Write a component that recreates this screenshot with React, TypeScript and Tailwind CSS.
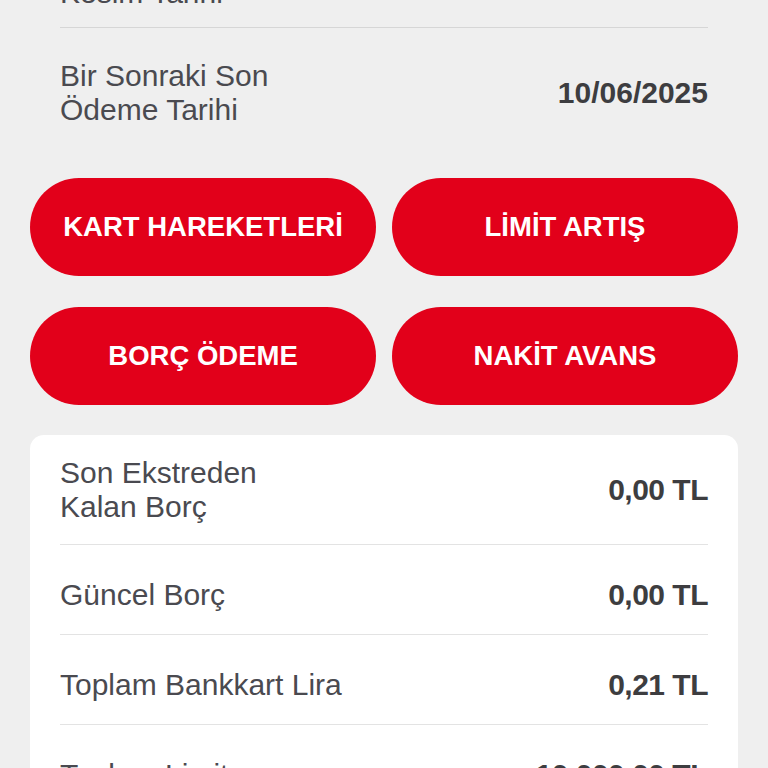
import React from "react";

const font = { fontFamily: '"Liberation Sans", Arial, sans-serif' };

function Row({
  label,
  value,
  two,
  className,
}: {
  label: React.ReactNode;
  value: string;
  two?: boolean;
  className?: string;
}) {
  return (
    <div
      className={
        "flex items-center justify-between " +
        (two ? "pt-[21px] pb-[20px] " : "pt-[33px] pb-[22px] ") +
        (className ?? "")
      }
    >
      <div className="text-[30px] leading-[34px] text-[#4a4a50]">{label}</div>
      <div className="text-[30px] leading-[34px] font-bold tracking-[-0.5px] text-[#3d3d40]">{value}</div>
    </div>
  );
}

function Btn({ children }: { children: React.ReactNode }) {
  return (
    <button className="h-[98px] rounded-full bg-[#e2001a] text-white text-[27.5px] font-bold flex items-center justify-center">
      {children}
    </button>
  );
}

export default function App() {
  return (
    <div className="w-[768px] h-[768px] overflow-hidden bg-[#efefef]" style={font}>
      <div className="px-[60px] -mt-[79px]">
        <div className="flex items-center justify-between pt-[21px] pb-[17px]">
          <div className="text-[30px] leading-[34px] text-[#4a4a50]">
            Hesap
            <br />
            Kesim Tarihi
          </div>
          <div className="text-[30px] leading-[34px] font-bold text-[#3d3d40]">26/05/2025</div>
        </div>
        <div className="h-px bg-[#d6d6d6]" />
        <div className="flex items-center justify-between pt-[31px] pb-[20px]">
          <div className="text-[30px] leading-[34px] text-[#4a4a50]">
            Bir Sonraki Son
            <br />
            Ödeme Tarihi
          </div>
          <div className="text-[30px] leading-[34px] font-bold text-[#3d3d40]">10/06/2025</div>
        </div>
      </div>

      <div className="px-[30px] mt-[31px] grid grid-cols-2 gap-x-[16px] gap-y-[31px]">
        <Btn>KART HAREKETLERİ</Btn>
        <Btn>LİMİT ARTIŞ</Btn>
        <Btn>BORÇ ÖDEME</Btn>
        <Btn>NAKİT AVANS</Btn>
      </div>

      <div className="mx-[30px] mt-[30px] bg-white rounded-[14px] px-[30px]">
        <Row
          two
          label={
            <>
              Son Ekstreden
              <br />
              Kalan Borç
            </>
          }
          value="0,00 TL"
        />
        <div className="h-px bg-[#e3e3e3]" />
        <Row label="Güncel Borç" value="0,00 TL" />
        <div className="h-px bg-[#e3e3e3]" />
        <Row label="Toplam Bankkart Lira" value="0,21 TL" />
        <div className="h-px bg-[#e3e3e3]" />
        <Row label="Toplam Limit" value="10.000,00 TL" />
      </div>
    </div>
  );
}
